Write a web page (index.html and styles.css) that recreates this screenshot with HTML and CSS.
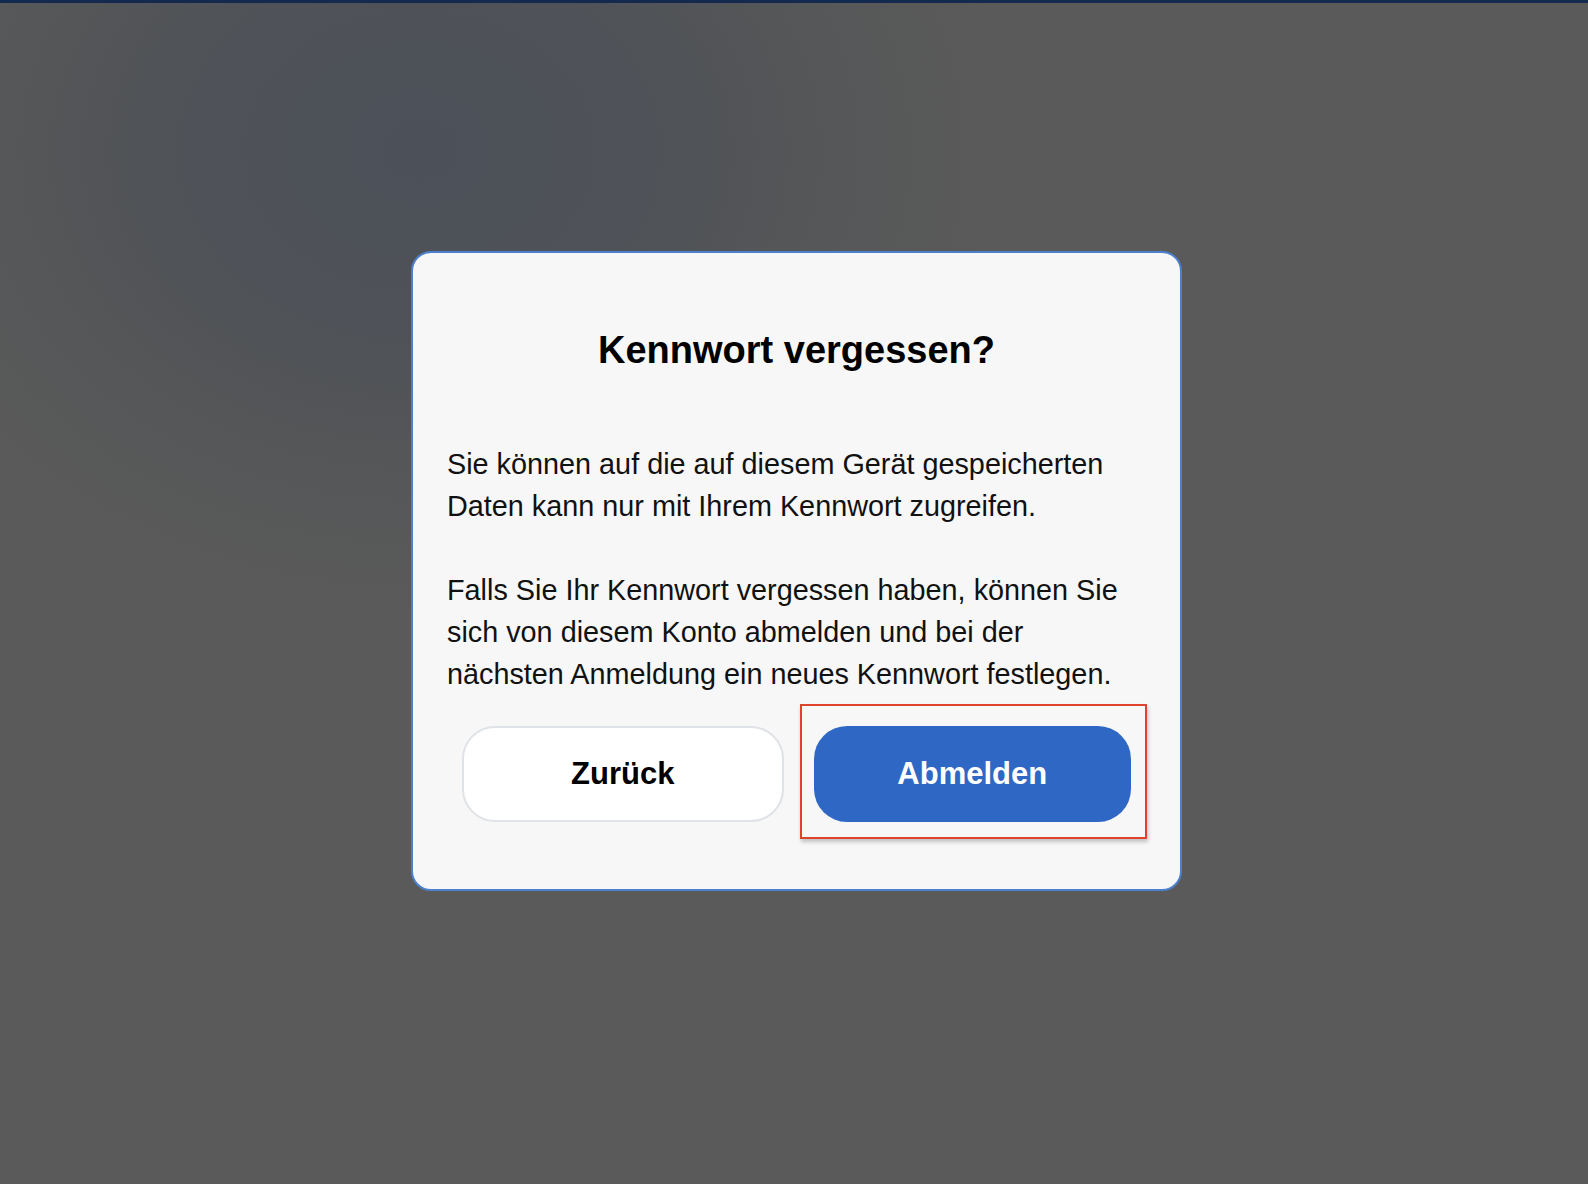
FILE: index.html
```html
<!DOCTYPE html>
<html lang="de">
<head>
    <meta charset="UTF-8">
    <meta name="viewport" content="width=device-width, initial-scale=1.0">
    <title>Kennwort vergessen?</title>
    <link rel="stylesheet" href="styles.css">
</head>
<body>

    <!-- Forgot password dialog -->
    <div class="dialog">
        <h1 class="dialog-title">Kennwort vergessen?</h1>

        <div class="dialog-text">
            <p>Sie können auf die auf diesem Gerät gespeicherten Daten kann nur mit Ihrem Kennwort zugreifen.</p>
            <p>Falls Sie Ihr Kennwort vergessen haben, können Sie sich von diesem Konto abmelden und bei der nächsten Anmeldung ein neues Kennwort festlegen.</p>
        </div>

        <div class="dialog-actions">
            <button type="button" class="btn btn-back">Zurück</button>
            <div class="highlight">
                <button type="button" class="btn btn-logout">Abmelden</button>
            </div>
        </div>
    </div>

</body>
</html>
```

FILE: styles.css
```css
/* Page backdrop */
body {
    margin: 0;
    min-height: 100vh;
    box-sizing: border-box;
    border-top: 3px solid #13294d;
    font-family: "Liberation Sans", Arial, sans-serif;
    color: #111111;
    background-color: #5a5a5a;
    background-image: radial-gradient(ellipse 600px 480px at 420px 150px, #4c5059 0%, #4f5257 40%, #565758 70%, #5a5a5a 100%);
    background-repeat: no-repeat;
    padding-top: 248px;
}

/* Dialog box */
.dialog {
    box-sizing: border-box;
    width: 771px;
    margin-left: 411px;
    padding: 74px 34px 67px;
    background: #f7f7f7;
    border: 2px solid #4c80cc;
    border-radius: 20px;
}

.dialog-title {
    margin: 0;
    font-size: 38px;
    line-height: 46px;
    font-weight: bold;
    color: #000000;
    text-align: center;
}

.dialog-text {
    max-width: 682px;
    margin-top: 70px;
    font-size: 28.8px;
    line-height: 42px;
}

.dialog-text p {
    margin: 0;
}

.dialog-text p + p {
    margin-top: 42px;
}

/* Buttons */
.dialog-actions {
    display: flex;
    gap: 30px;
    margin-top: 31px;
    padding: 0 15px;
}

.btn {
    box-sizing: border-box;
    height: 96px;
    padding: 0;
    border-radius: 33px;
    font-family: "Liberation Sans", Arial, sans-serif;
    font-size: 31px;
    font-weight: bold;
    cursor: pointer;
}

.btn-back {
    flex: 1 1 0;
    min-width: 0;
    background: #ffffff;
    color: #000000;
    border: 2px solid #dfe2e6;
}

.highlight {
    flex: 1 1 0;
    min-width: 0;
    position: relative;
    display: flex;
}

.btn-logout {
    flex: 1;
    background: #2f67c4;
    color: #ffffff;
    border: none;
}

/* red focus marker drawn round the logout button */
.highlight::after {
    content: "";
    position: absolute;
    top: -22px;
    left: -14px;
    right: -16px;
    bottom: -17px;
    border: 2px solid #e2412b;
    box-shadow: 1px 3px 4px rgba(0, 0, 0, 0.22);
    pointer-events: none;
}
```
